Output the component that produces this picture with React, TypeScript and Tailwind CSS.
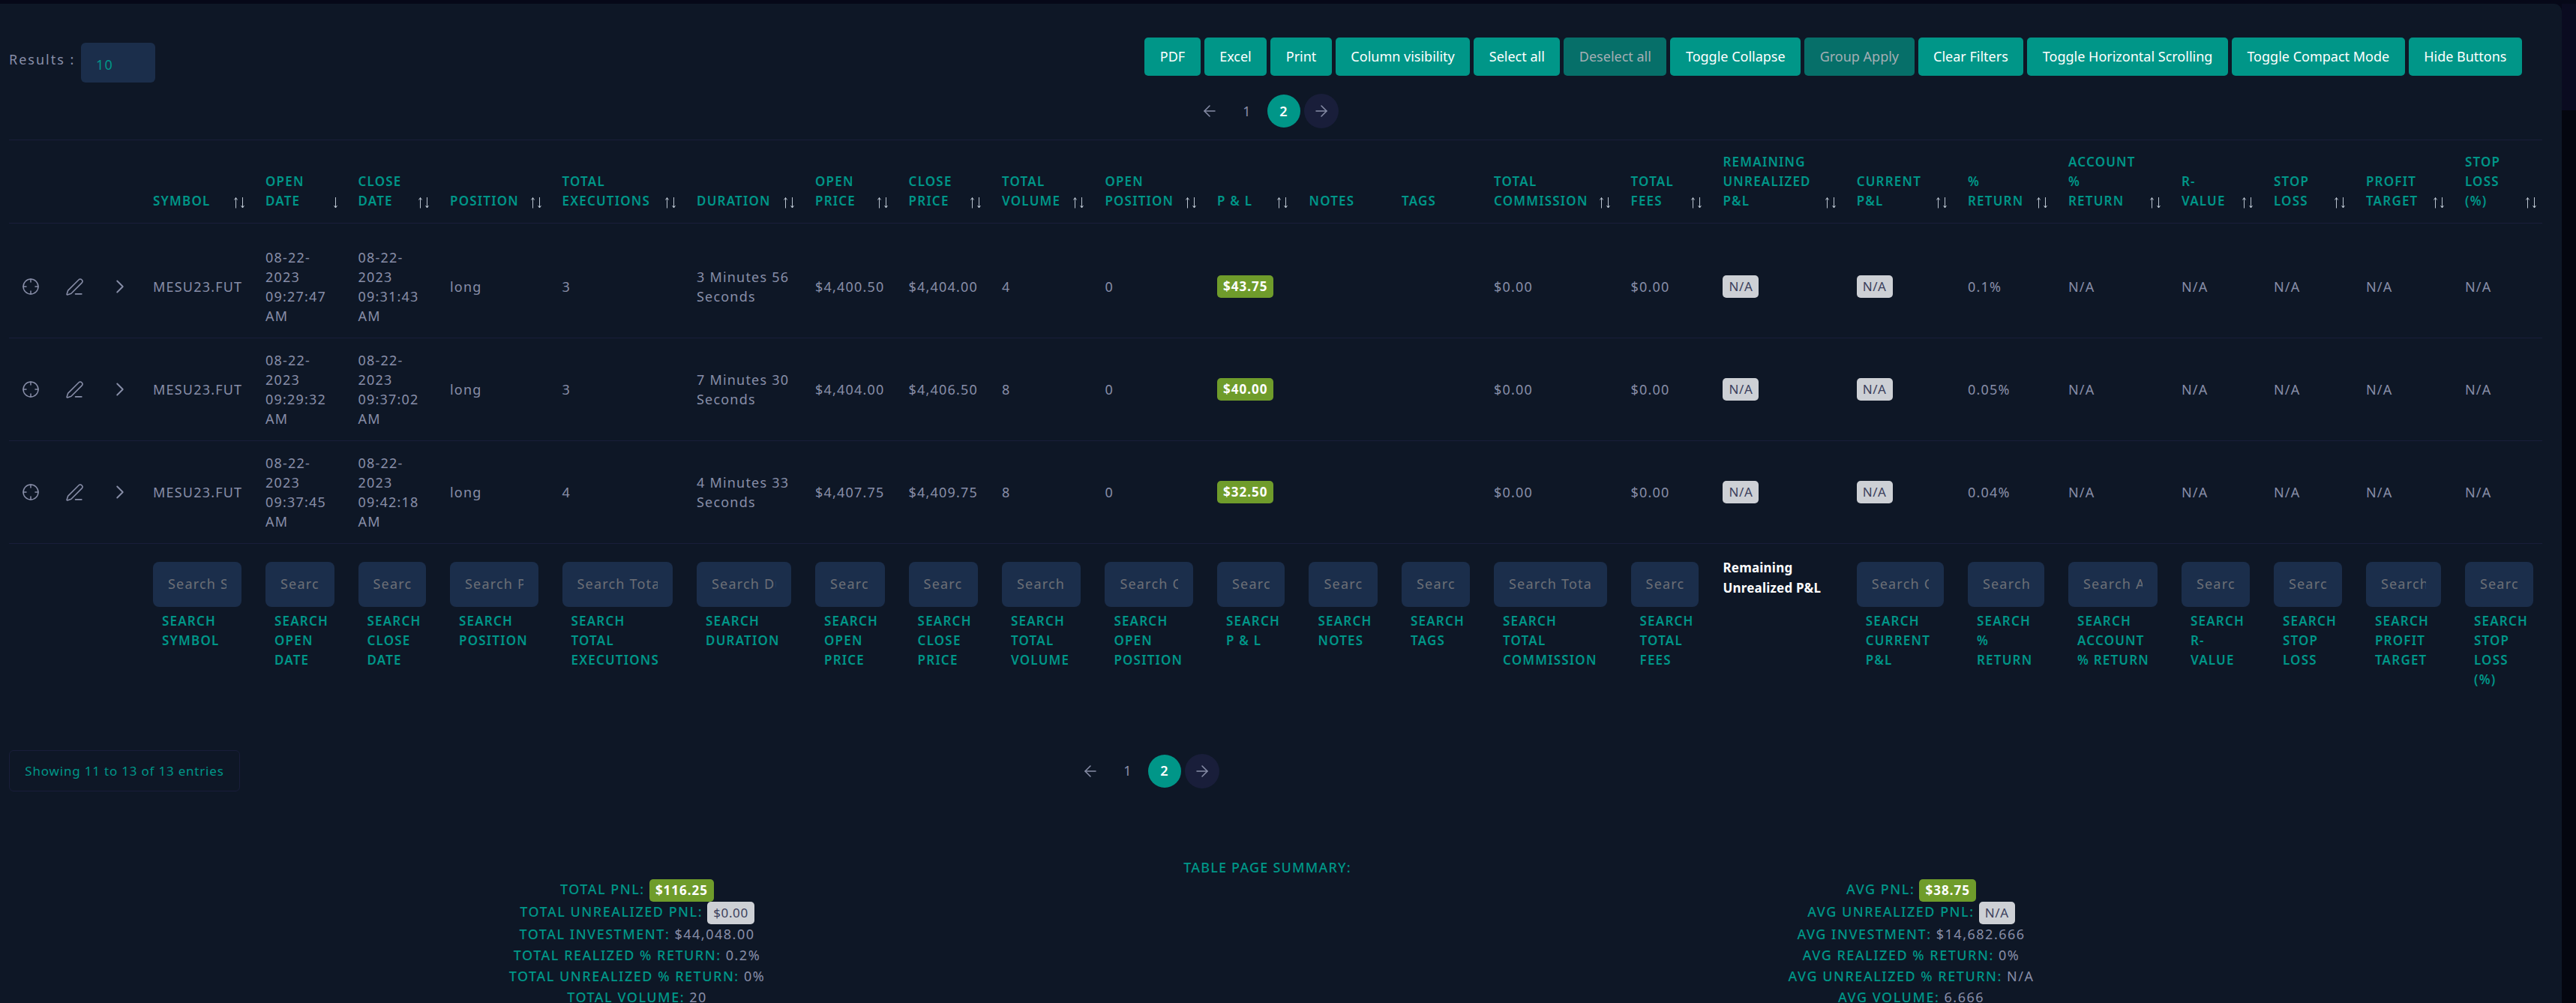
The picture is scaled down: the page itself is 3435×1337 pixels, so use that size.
import { ArrowLeft, ArrowRight, ChevronRight, Crosshair, PenLine } from 'lucide-react'

const columns = [
  { title: 'SYMBOL', width: 150, search: 'Search Symbol', label: 'SEARCH\nSYMBOL' },
  { title: 'OPEN\nDATE', width: 123.5, search: 'Search Open Date', label: 'SEARCH\nOPEN\nDATE', sorted: true },
  { title: 'CLOSE\nDATE', width: 122.5, search: 'Search Close Date', label: 'SEARCH\nCLOSE\nDATE' },
  { title: 'POSITION', width: 149.5, search: 'Search Position', label: 'SEARCH\nPOSITION' },
  { title: 'TOTAL\nEXECUTIONS', width: 179.5, search: 'Search Total Executions', label: 'SEARCH\nTOTAL\nEXECUTIONS' },
  { title: 'DURATION', width: 158, search: 'Search Duration', label: 'SEARCH\nDURATION' },
  { title: 'OPEN\nPRICE', width: 124.6, search: 'Search Open Price', label: 'SEARCH\nOPEN\nPRICE' },
  { title: 'CLOSE\nPRICE', width: 124.4, search: 'Search Close Price', label: 'SEARCH\nCLOSE\nPRICE' },
  { title: 'TOTAL\nVOLUME', width: 137.4, search: 'Search Total Volume', label: 'SEARCH\nTOTAL\nVOLUME' },
  { title: 'OPEN\nPOSITION', width: 149.6, search: 'Search Open Position', label: 'SEARCH\nOPEN\nPOSITION' },
  { title: 'P & L', width: 122.5, search: 'Search P & L', label: 'SEARCH\nP & L' },
  { title: 'NOTES', width: 123.5, search: 'Search Notes', label: 'SEARCH\nNOTES', noSort: true },
  { title: 'TAGS', width: 123, search: 'Search Tags', label: 'SEARCH\nTAGS', noSort: true },
  { title: 'TOTAL\nCOMMISSION', width: 182.6, search: 'Search Total Commission', label: 'SEARCH\nTOTAL\nCOMMISSION' },
  { title: 'TOTAL\nFEES', width: 122.9, search: 'Search Total Fees', label: 'SEARCH\nTOTAL\nFEES' },
  { title: 'REMAINING\nUNREALIZED\nP&L', width: 178.2 },
  { title: 'CURRENT\nP&L', width: 148.3, search: 'Search Current P&L', label: 'SEARCH\nCURRENT\nP&L' },
  { title: '%\nRETURN', width: 134, search: 'Search % Return', label: 'SEARCH\n%\nRETURN' },
  { title: 'ACCOUNT\n%\nRETURN', width: 151, search: 'Search Account % Return', label: 'SEARCH\nACCOUNT\n% RETURN' },
  { title: 'R-\nVALUE', width: 123, search: 'Search R-Value', label: 'SEARCH\nR-\nVALUE' },
  { title: 'STOP\nLOSS', width: 123, search: 'Search Stop Loss', label: 'SEARCH\nSTOP\nLOSS' },
  { title: 'PROFIT\nTARGET', width: 132, search: 'Search Profit Target', label: 'SEARCH\nPROFIT\nTARGET' },
  { title: 'STOP\nLOSS\n(%)', width: 123, search: 'Search Stop Loss (%)', label: 'SEARCH\nSTOP\nLOSS\n(%)' },
]

const trades = [
  { open: '08-22-\n2023\n09:27:47\nAM', close: '08-22-\n2023\n09:31:43\nAM', execs: '3', duration: '3 Minutes 56\nSeconds', openPrice: '$4,400.50', closePrice: '$4,404.00', volume: '4', pnl: '$43.75', ret: '0.1%' },
  { open: '08-22-\n2023\n09:29:32\nAM', close: '08-22-\n2023\n09:37:02\nAM', execs: '3', duration: '7 Minutes 30\nSeconds', openPrice: '$4,404.00', closePrice: '$4,406.50', volume: '8', pnl: '$40.00', ret: '0.05%' },
  { open: '08-22-\n2023\n09:37:45\nAM', close: '08-22-\n2023\n09:42:18\nAM', execs: '4', duration: '4 Minutes 33\nSeconds', openPrice: '$4,407.75', closePrice: '$4,409.75', volume: '8', pnl: '$32.50', ret: '0.04%' },
]

const buttons = [
  { name: 'PDF' },
  { name: 'Excel' },
  { name: 'Print' },
  { name: 'Column visibility' },
  { name: 'Select all' },
  { name: 'Deselect all', dim: true },
  { name: 'Toggle Collapse' },
  { name: 'Group Apply', dim: true },
  { name: 'Clear Filters' },
  { name: 'Toggle Horizontal Scrolling' },
  { name: 'Toggle Compact Mode' },
  { name: 'Hide Buttons' },
]

function SortIcon({ only }: { only?: boolean }) {
  return (
    <svg width="16" height="16" viewBox="0 0 16 16" fill="none" stroke="#b9c3cf" strokeWidth="1" className="absolute right-[11px] bottom-[19px]">
      {!only && <path d="M3.5 15.5V1.5M1.5 4.5l2-3 2 3" />}
      <path d="M12.5 1V15M10.5 12l2 3 2-3" />
    </svg>
  )
}

function Badge({ children, kind }: { children: string; kind: 'green' | 'gray' }) {
  const color = kind === 'green' ? 'bg-[#6f9c2b] font-bold text-white tracking-[1px]' : 'bg-[#cdd0d5] text-[#3b3f5c] tracking-[0.6px]'
  return <span className={`inline-block h-[30px] rounded-[5px] px-[8px] align-middle text-[17px] leading-[30px] ${color}`}>{children}</span>
}

function Pagination({ className }: { className: string }) {
  return (
    <div className={`flex items-center gap-[5px] text-[#888ea8] ${className}`}>
      <div className="flex h-[45px] w-[46px] items-center justify-center"><ArrowLeft size={24} strokeWidth={1.5} /></div>
      <div className="flex h-[45px] w-[44px] items-center justify-center">1</div>
      <div className="flex h-[44px] w-[44px] items-center justify-center rounded-full bg-[#009688] font-semibold text-white">2</div>
      <div className="flex h-[46px] w-[46px] items-center justify-center rounded-full bg-[#191e3a]"><ArrowRight size={24} strokeWidth={1.5} /></div>
    </div>
  )
}

function SummaryRow({ label, value, badge }: { label: string; value: string; badge?: 'green' | 'gray' }) {
  return (
    <div className={badge === 'green' ? 'h-[30px] leading-[30px]' : badge ? 'h-[31px] leading-[31px]' : 'h-[28px] leading-[28px]'}>
      <span className="font-medium text-[#009688]">{label}: </span>
      {badge ? <Badge kind={badge}>{value}</Badge> : <span className="text-[#888ea8]">{value}</span>}
    </div>
  )
}

function Summary({ prefix, rows }: { prefix: string; rows: { label: string; value: string; badge?: 'green' | 'gray' }[] }) {
  return (
    <div className="text-center tracking-[1.5px]">
      {rows.map((r) => (
        <SummaryRow key={r.label} label={`${prefix} ${r.label}`} value={r.value} badge={r.badge} />
      ))}
    </div>
  )
}

export default function App() {
  return (
    <div className="flex h-[1337px] overflow-hidden bg-[#060818] pt-[5px] font-['Noto_Sans',sans-serif] text-[18px] tracking-[1.2px] text-[#888ea8]">
      <div className="w-[3416px] shrink-0 overflow-hidden rounded-tr-[10px] bg-[#0e1726]">
        <div className="flex items-start justify-between pt-[45px] pr-[53px] pl-3">
          <div className="mt-[7px] flex items-center gap-[8px]">
            <span className="-mt-[9px] w-[88px] tracking-[2px] whitespace-nowrap">Results :</span>
            <div className="flex h-[53px] w-[99px] items-center rounded-[6px] bg-[#1b2e4b] pt-[5px] pl-5 text-[#009688]">10</div>
          </div>
          <div className="flex gap-[5px]">
            {buttons.map((b) => (
              <button
                key={b.name}
                className={`h-[51px] rounded-[5px] px-[20.5px] text-[18px] tracking-normal ${b.dim ? 'bg-[#066f69] text-[#a3aeb4]' : 'bg-[#009688] text-white'}`}
              >
                {b.name}
              </button>
            ))}
          </div>
        </div>
        <Pagination className="mt-[15px] ml-[1590px]" />

        <div className="mt-[15px] ml-3 w-[3378px] overflow-hidden">
          <table className="w-[3382px] table-fixed border-separate border-spacing-0">
            <colgroup>
              <col className="w-[176px]" />
              {columns.map((c) => (
                <col key={c.title} style={{ width: c.width }} />
              ))}
            </colgroup>
            <thead>
              <tr>
                <th className="border-y border-[#191e3a]" />
                {columns.map((c) => (
                  <th key={c.title} className="relative border-y border-[#191e3a] px-4 py-4 text-left align-bottom text-[17px] leading-[26px] font-semibold tracking-[1.2px] whitespace-pre-line text-[#009688]">
                    {c.title}
                    {!c.noSort && <SortIcon only={c.sorted} />}
                  </th>
                ))}
              </tr>
              <tr>
                <th colSpan={columns.length + 1} className="h-[16px]" />
              </tr>
            </thead>
            <tbody>
              {trades.map((t) => (
                <tr key={t.open} className="leading-[26px]">
                  <td className="h-[137px] border-b border-[#191e3a]">
                    <div className="flex items-center text-[#888ea8]">
                      <Crosshair size={24} strokeWidth={1.5} className="ml-[17px]" />
                      <PenLine size={25} strokeWidth={1.5} className="ml-[34px]" />
                      <ChevronRight size={30} strokeWidth={1.5} className="ml-[33px]" />
                    </div>
                  </td>
                  {['MESU23.FUT', t.open, t.close, 'long', t.execs, t.duration, t.openPrice, t.closePrice, t.volume, '0'].map((v, i) => (
                    <td key={i} className="border-b border-[#191e3a] px-4 py-4 whitespace-pre-line">{v}</td>
                  ))}
                  <td className="border-b border-[#191e3a] px-4"><Badge kind="green">{t.pnl}</Badge></td>
                  <td className="border-b border-[#191e3a]" />
                  <td className="border-b border-[#191e3a]" />
                  <td className="border-b border-[#191e3a] px-4">$0.00</td>
                  <td className="border-b border-[#191e3a] px-4">$0.00</td>
                  <td className="border-b border-[#191e3a] px-4"><Badge kind="gray">N/A</Badge></td>
                  <td className="border-b border-[#191e3a] px-4"><Badge kind="gray">N/A</Badge></td>
                  <td className="border-b border-[#191e3a] px-4">{t.ret}</td>
                  {[0, 1, 2, 3, 4].map((i) => (
                    <td key={i} className="border-b border-[#191e3a] px-4">N/A</td>
                  ))}
                </tr>
              ))}
            </tbody>
            <tfoot>
              <tr>
                <td />
                {columns.map((c) =>
                  c.search ? (
                    <td key={c.title} className="px-4 pt-6 align-top">
                      <input
                        readOnly
                        placeholder={c.search}
                        className="h-[60px] w-full rounded-[8px] bg-[#1b2e4b] px-5 pb-[2px] text-[18px] outline-none placeholder:text-[#6c6f76]"
                      />
                      <div className="mt-[6px] pl-3 text-[17px] leading-[26px] font-semibold tracking-[1.2px] whitespace-pre-line text-[#009688]">{c.label}</div>
                    </td>
                  ) : (
                    <td key={c.title} className="px-4 pt-[18px] align-top text-[17px] leading-[27px] font-bold tracking-[0.2px] text-white">Remaining Unrealized P&amp;L</td>
                  ),
                )}
              </tr>
            </tfoot>
          </table>
        </div>

        <div className="mt-[81px] ml-3 flex items-center">
          <div className="flex h-[55px] w-[308px] items-center justify-center rounded-[6px] border border-[#191e3a] text-[17px] tracking-[0.8px] text-[#009688]">
            Showing 11 to 13 of 13 entries
          </div>
          <Pagination className="ml-[1111px]" />
        </div>

        <div className="mt-[89px] w-[3380px] text-center leading-[24px] font-medium text-[#009688]">TABLE PAGE SUMMARY:</div>
        <div className="-mt-[2px] grid w-[3398px] grid-cols-2 pt-[4px]">
          <Summary
            prefix="TOTAL"
            rows={[
              { label: 'PNL', value: '$116.25', badge: 'green' },
              { label: 'UNREALIZED PNL', value: '$0.00', badge: 'gray' },
              { label: 'INVESTMENT', value: '$44,048.00' },
              { label: 'REALIZED % RETURN', value: '0.2%' },
              { label: 'UNREALIZED % RETURN', value: '0%' },
              { label: 'VOLUME', value: '20' },
            ]}
          />
          <Summary
            prefix="AVG"
            rows={[
              { label: 'PNL', value: '$38.75', badge: 'green' },
              { label: 'UNREALIZED PNL', value: 'N/A', badge: 'gray' },
              { label: 'INVESTMENT', value: '$14,682.666' },
              { label: 'REALIZED % RETURN', value: '0%' },
              { label: 'UNREALIZED % RETURN', value: 'N/A' },
              { label: 'VOLUME', value: '6.666' },
            ]}
          />
        </div>
      </div>
      <div className="flex-1">
        <div className="h-[142px] bg-[#0a0b20]" />
        <div className="h-full bg-[#04060f]" />
      </div>
    </div>
  )
}
